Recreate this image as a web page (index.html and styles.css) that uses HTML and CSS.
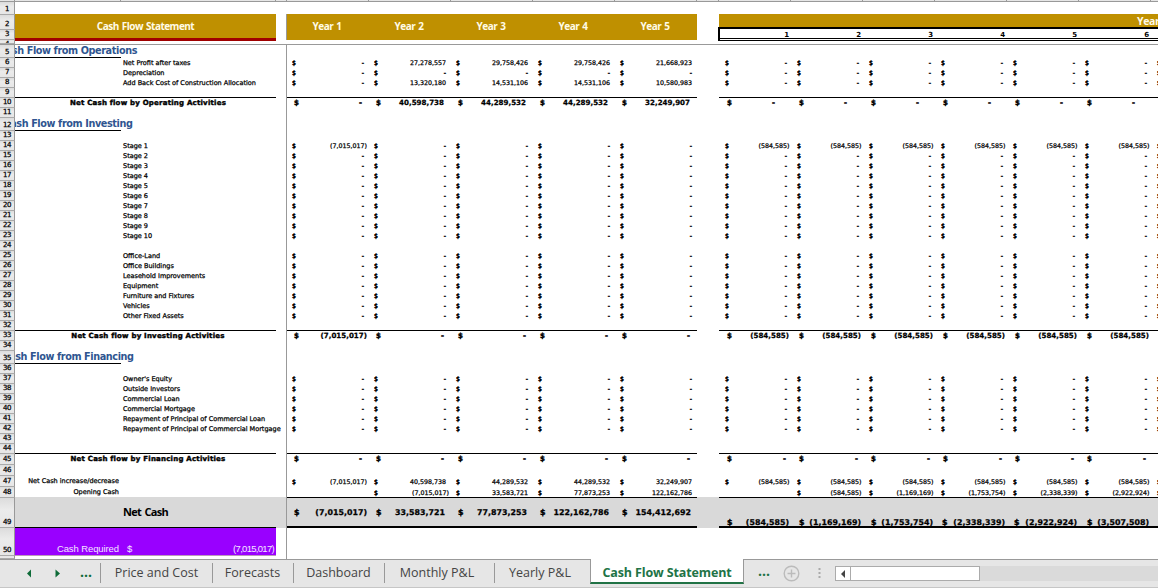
FILE: index.html
```html
<!DOCTYPE html>
<html lang="en">
<head>
<meta charset="utf-8">
<title>Cash Flow Statement</title>
<link rel="stylesheet" href="styles.css">
</head>
<body>
<div class="app">
  <div class="colheads"><i class="w-gutter"></i><i class="w-a"></i><i class="w-b"></i><i class="w-gap"></i><i class="w-y"></i><i class="w-y"></i><i class="w-y"></i><i class="w-y"></i><i class="w-y"></i><i class="w-sep"></i><i class="w-m"></i><i class="w-m"></i><i class="w-m"></i><i class="w-m"></i><i class="w-m"></i><i class="w-m"></i></div>
  <div class="frozen">
    <div class="gutter"><div class="num h13">1</div><div class="num h15">2</div><div class="num h10">3</div><div class="num h4"><span class="cutnum">4</span></div></div>
    <div class="title">Cash Flow Statement</div>
    <div class="years"><span>Year 1</span><span>Year 2</span><span>Year 3</span><span>Year 4</span><span>Year 5</span></div>
    <div class="months"><div class="mtitle">Year 1</div><div class="mnums"><span>1</span><span>2</span><span>3</span><span>4</span><span>5</span><span>6</span></div></div>
  </div>
  <div class="body" id="body"></div>
  <div class="tabs">
    <div class="nav">
      <svg width="9" height="9" viewBox="0 0 9 9"><path d="M7 0.5v8L3 4.5z"/></svg>
      <svg width="9" height="9" viewBox="0 0 9 9"><path d="M3.5 0.5v8L8 4.5z"/></svg>
      <b>...</b>
    </div>
    <div class="tab t1">Price and Cost</div><div class="tab t2">Forecasts</div><div class="tab t3">Dashboard</div><div class="tab t4">Monthly P&amp;L</div><div class="tab t5">Yearly P&amp;L</div>
    <div class="tab active">Cash Flow Statement</div>
    <b class="more">...</b>
    <svg class="plus" width="17" height="17" viewBox="0 0 17 17"><circle cx="8.5" cy="8.5" r="7.3"/><path d="M8.5 4.5v8M4.5 8.5h8"/></svg>
    <svg class="grip" width="3" height="12" viewBox="0 0 3 12"><path d="M.5 1h2v2h-2zM.5 5h2v2h-2zM.5 9h2v2h-2z"/></svg>
    <div class="scroll"><div class="arrow"><svg width="6" height="8" viewBox="0 0 6 8"><path d="M5 0v8L1 4z"/></svg></div><div class="thumb"></div></div>
  </div>
</div>
<script src="app.js"></script>
</body>
</html>
```
FILE: styles.css
```css
* { box-sizing: border-box; }
body { margin: 0; background: #fff; font-family: "DejaVu Sans", sans-serif; color: #000; }
.app { width: 1158px; height: 588px; overflow: hidden; display: flex; flex-direction: column; }
.app > * { flex: none; }
.colheads { height: 2px; display: flex; background: #e6e6e6; border-bottom: 1px solid #999; }
.colheads i { flex: none; border-right: 1px solid #999; }
.w-gutter { width: 15px; } .w-a { width: 106px; } .w-b { width: 155px; } .w-gap { width: 11px; }
.w-y { width: 82px; } .w-sep { width: 22px; } .w-m { width: 72px; }

.frozen { height: 43px; display: flex; border-bottom: 1px solid #999; overflow: hidden; }
.frozen > * { flex: none; }
.gutter { width: 15px; }
.num { width: 15px; flex: none; background: linear-gradient(#dcdcdc, #ebebeb 40%, #e6e6e6); border-right: 1px solid #999; border-bottom: 1px solid #aaa; font: 7px/9px "DejaVu Sans", sans-serif; -webkit-text-stroke: .25px #000; letter-spacing: -.5px; display: flex; align-items: flex-end; justify-content: center; overflow: hidden; }
.h13 { height: 13px; } .h15 { height: 15px; } .h10 { height: 10px; } .h4 { height: 4px; }
.cutnum { height: 3px; line-height: 8px; }
.title { margin-top: 12px; width: 261px; height: 27px; background: #bf9000; border-bottom: 3px solid #a00000; color: #fffbe6; font: bold 10px/25px "Open Sans", sans-serif; letter-spacing: -.52px; word-spacing: 1px; text-align: center; }
.years { margin: 12px 0 0 10px; width: 411px; height: 26px; border-left: 1px solid #999; background: #bf9000; display: flex; }
.years span { width: 80px; margin-right: 2px; text-align: center; color: #fffbe6; font: bold 10px/25px "Open Sans", sans-serif; letter-spacing: -.4px; word-spacing: .6px; }
.months { margin: 12px 0 0 21px; width: 460px; }
.mtitle { margin-left: 1px; height: 13px; background: #bf9000; color: #fffbe6; font: bold 10.5px/15px "Open Sans", sans-serif; letter-spacing: -.4px; padding-left: 418px; white-space: nowrap; }
.mnums { height: 14px; border: solid #000; border-width: 2px 0 1px 2px; display: flex; background: linear-gradient(#000, #000) 0 9px / 100% 1px no-repeat; }
.mnums span { width: 72px; flex: none; text-align: right; font: bold 7px/12px "DejaVu Sans", sans-serif; padding-right: 3px; }

.body { height: 514px; overflow: hidden; background: #fff; }
.row { display: flex; height: 10px; overflow: hidden; font-size: 6.3px; line-height: 10px; white-space: nowrap; -webkit-text-stroke: .25px currentColor; }
.row > * { flex: none; }
.r11 { height: 11px; } .r13 { height: 13px; } .r28 { height: 28px; } .r30 { height: 30px; } .r3 { height: 3px; }
.labels { width: 261px; display: flex; font-size: 6.5px; }
.la { width: 106px; flex: none; text-align: right; padding-right: 2px; }
.lb { flex: none; padding-left: 2px; }
.gap { width: 11px; border-right: 1px solid #999; }
.ys { width: 410px; display: flex; }
.sep { width: 22px; }
.ms { width: 504px; display: flex; }
.cell { flex: none; display: flex; justify-content: space-between; padding-left: 5px; }
.ys .cell { width: 82px; padding-right: 5px; }
.ms .cell { width: 72px; padding-right: 4px; padding-left: 6px; }
.cell span:first-child { -webkit-text-stroke-width: .45px; }
.cell .dash { -webkit-text-stroke-width: .5px; }
.ys .cell.neg { padding-right: 2px; }
.ms .cell.neg { padding-right: 1.5px; }
.row.total { font-weight: bold; font-size: 7.1px; }
.total .labels { display: block; text-align: center; padding-left: 5px; font-size: 7px; letter-spacing: .22px; -webkit-text-stroke-width: .4px; }
.pre .labels, .pre .ys, .pre .ms { border-bottom: 1px solid #000; }
.total .ys .cell { padding: 0 7px; } .total .ms .cell { padding: 0 5px 0 8px; }
.total .cell.neg { padding-right: 2px !important; }
.wide .ms .cell { padding-right: 16px; }
.head .labels { overflow: hidden; }
.head .la { display: flex; justify-content: center; padding: 0; border-bottom: 1px solid #000; color: #2f5590; font-weight: bold; font-size: 9.7px; line-height: 12px; letter-spacing: -.4px; -webkit-text-stroke-width: 0; }
.sum { line-height: 11.5px; }
.opening .ys, .opening .ms { border-bottom: 1px solid #000; }
.opening .labels, .opening .gap, .opening .sep { background: linear-gradient(#d9d9d9, #d9d9d9) 0 100% / 100% 1px no-repeat; }
.net { background: #d9d9d9; font-weight: bold; font-size: 7.9px; }
.net .labels { border-bottom: 1px solid #000; justify-content: center; font: bold 11px/28px "Open Sans", sans-serif; letter-spacing: -.75px; word-spacing: 1.5px; -webkit-text-stroke-width: 0; }
.net .ys, .net .ms { border-bottom: 2px solid #000; }
.net .ys { line-height: 30px; } .net .ms { line-height: 50px; height: 30px; overflow: hidden; }
.net .ys .cell { padding: 0 6px 0 7px; } .net .ms .cell { padding: 0 6px 0 8px; }
.net .cell.neg { padding-right: 2px !important; }
.net .ms .cell:nth-child(4), .net .ms .cell:nth-child(5) { padding-left: 7px; }
.purple .labels { background: #90f; color: #f3e6ff; font: 9.5px/42px "Liberation Sans", sans-serif; letter-spacing: -.1px; border-bottom: 1px solid #b9b; -webkit-text-stroke-width: 0; }
.purple .lb { width: 155px; display: flex; justify-content: space-between; padding: 0 2px 0 6px; }
.purple .lb span:last-child { letter-spacing: -.7px; }

.tabs { height: 29px; background: #e6e6e6; border-top: 1px solid #999; border-bottom: 1px solid #c6c6c6; display: flex; font: 12.5px/24px "Open Sans", sans-serif; color: #444; white-space: nowrap; }
.tabs > * { flex: none; }
.nav { width: 101px; display: flex; padding: 6px 0 0 24px; gap: 19px; fill: #0e6b38; border-right: 1px solid #999; height: 20px; margin-top: 3px; }
.nav b { line-height: 6px; font-size: 14px; color: #0e6b38; }
.tab { height: 20px; margin-top: 3px; border-right: 1px solid #999; text-align: center; line-height: 19px; }
.t1 { width: 112px; } .t2 { width: 81px; padding-right: 1px; } .t3 { width: 91px; padding-right: 1px; } .t4 { width: 110px; padding-right: 5px; } .t5 { width: 95px; border: 0; padding-right: 5px; }
.active { width: 154px; height: 25px; margin-top: -1px; background: #fff; border: solid #999; border-width: 0 1px; border-bottom: 2px solid #217346; color: #217346; font-weight: bold; letter-spacing: -.12px; line-height: 27px; }
.more { margin-left: 14px; width: 25px; font-size: 14px; color: #217346; line-height: 22px; }
.plus { margin-top: 5px; fill: none; stroke: #bbb; stroke-width: 1.4; }
.grip { margin: 7px 0 0 18px; fill: #aaa; }
.scroll { margin: 6px 0 0 14px; width: 324px; height: 15px; background: #dadada; display: flex; }
.arrow { width: 16px; background: #fff; border: 1px solid #ababab; fill: #444; display: flex; align-items: center; justify-content: center; }
.thumb { width: 129px; background: #fff; border: 1px solid #ababab; border-left: 0; }
```
FILE: app.js
```js
const D5 = ['-', '-', '-', '-', '-'];
const D6 = ['-', '-', '-', '-', '-', '-'];
const M6 = Array(6).fill('(584,585)');
const item = label => ({ b: label, y: D5, m: D6 });
const blank = cls => ({ cls });
const rows = [
  { cls: 'head r13', a: 'Cash Flow from Operations' },
  { b: 'Net Profit after taxes', y: ['-', '27,278,557', '29,758,426', '29,758,426', '21,668,923'], m: D6 },
  item('Depreciation'),
  { b: 'Add Back Cost of Construction Allocation', y: ['-', '13,320,180', '14,531,106', '14,531,106', '10,580,983'], m: D6 },
  blank('pre'),
  { cls: 'total wide', t: 'Net Cash flow by Operating Activities', y: ['-', '40,598,738', '44,289,532', '44,289,532', '32,249,907'], m: D6 },
  blank(),
  { cls: 'head r13', a: 'Cash Flow from Investing' },
  blank(),
  { b: 'Stage 1', y: ['(7,015,017)', '-', '-', '-', '-'], m: M6 },
  ...[2, 3, 4, 5, 6, 7, 8, 9, 10].map(n => item('Stage ' + n)),
  blank(),
  ...['Office-Land', 'Office Buildings', 'Leasehold Improvements', 'Equipment', 'Furniture and Fixtures', 'Vehicles', 'Other Fixed Assets'].map(item),
  blank('pre'),
  { cls: 'total', t: 'Net Cash flow by Investing Activities', y: ['(7,015,017)', '-', '-', '-', '-'], m: M6 },
  blank(),
  { cls: 'head r13', a: 'Cash Flow from Financing' },
  blank(),
  ...["Owner's Equity", 'Outside Investors', 'Commercial Loan', 'Commercial Mortgage', 'Repayment of Principal of Commercial Loan', 'Repayment of Principal of Commercial Mortgage'].map(item),
  blank(), blank('pre'),
  { cls: 'total r11', t: 'Net Cash flow by Financing Activities', y: D5, m: D6 },
  blank('r11'),
  { cls: 'r11 sum', a: 'Net Cash increase/decrease', y: ['(7,015,017)', '40,598,738', '44,289,532', '44,289,532', '32,249,907'], m: M6 },
  { cls: 'r11 sum opening', a: 'Opening Cash', y: [null, '(7,015,017)', '33,583,721', '77,873,253', '122,162,786'], m: [null, '(584,585)', '(1,169,169)', '(1,753,754)', '(2,338,339)', '(2,922,924)'] },
  { cls: 'net r30', t: 'Net Cash', y: ['(7,015,017)', '33,583,721', '77,873,253', '122,162,786', '154,412,692'], m: ['(584,585)', '(1,169,169)', '(1,753,754)', '(2,338,339)', '(2,922,924)', '(3,507,508)'] },
  { cls: 'purple r28', a: 'Cash Required', b: '<span>$</span><span>(7,015,017)</span>' },
  { cls: 'r3' }
];
const cell = v => v === null ? '<div class="cell"></div>'
  : `<div class="cell${v[0] === '(' ? ' neg' : ''}"><span>$</span><span class="${v === '-' ? 'dash' : 'val'}">${v}</span></div>`;
document.getElementById('body').innerHTML = rows.map((r, i) => {
  const labels = r.t || `<div class="la">${r.a ? `<span>${r.a}</span>` : ''}</div><div class="lb">${r.b || ''}</div>`;
  const months = r.m ? r.m.map(cell).join('') + '<div class="cell"><span>$</span></div>' : '';
  return `<div class="row ${r.cls || ''}"><div class="num">${i + 5}</div><div class="labels">${labels}</div><div class="gap"></div><div class="ys">${(r.y || []).map(cell).join('')}</div><div class="sep"></div><div class="ms">${months}</div></div>`;
}).join('');
```
